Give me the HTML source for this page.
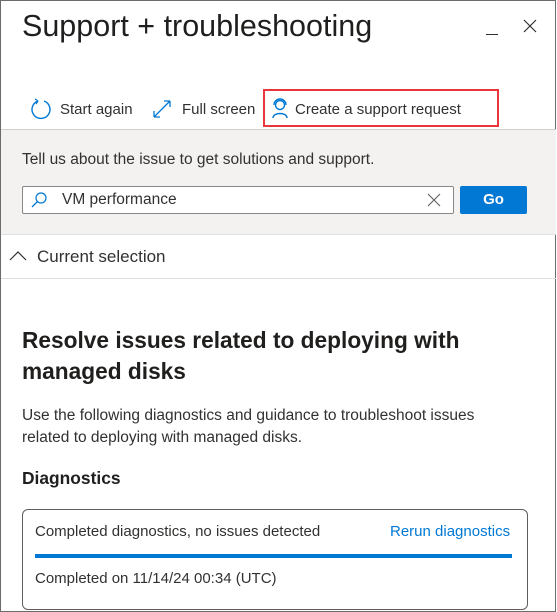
<!DOCTYPE html>
<html><head><style>
*{margin:0;padding:0;box-sizing:border-box}
body{width:557px;height:612px;overflow:hidden;background:#fff;font-family:"Liberation Sans",sans-serif;color:#323130;position:relative}
.frame{position:absolute;left:0;top:0;width:556px;height:612px;border:1px solid #6b6b6b}
.a{position:absolute;white-space:nowrap}
</style></head><body>
<div class="frame"></div>
<div class="a" style="left:22px;top:9px;font-size:30.5px;color:#201f1e">Support + troubleshooting</div>
<div class="a" style="left:486px;top:34px;width:12px;height:1px;background:#323130"></div>
<svg class="a" style="left:523px;top:19px" width="14" height="14"><path d="M1 1L13 13M13 1L1 13" stroke="#323130" stroke-width="1.2"/></svg>
<svg class="a" style="left:30px;top:98px" width="22" height="22" viewBox="0 0 22 22"><path d="M8 3A9 9 0 1 0 14 3" fill="none" stroke="#0078d4" stroke-width="1.4"/><path d="M8 3L5 1M8 3L6 6" stroke="#0078d4" stroke-width="1.2" fill="none"/></svg>
<div class="a" style="left:60px;top:101px;font-size:15px">Start again</div>
<svg class="a" style="left:152px;top:99px" width="20" height="20"><path d="M2 18L18 2M2 18V12M2 18H8M18 2H12M18 2V8" stroke="#0078d4" stroke-width="1.3" fill="none"/></svg>
<div class="a" style="left:182px;top:101px;font-size:15px">Full screen</div>
<div class="a" style="left:263px;top:89px;width:236px;height:38px;border:2px solid #e8383d"></div>
<svg class="a" style="left:270px;top:97px" width="20" height="22" viewBox="0 0 20 22"><circle cx="10" cy="8" r="4.5" fill="none" stroke="#0078d4" stroke-width="1.4"/><path d="M4 8A6 6 0 0 1 16 8M3 21C3 15 17 15 17 21" fill="none" stroke="#0078d4" stroke-width="1.4"/></svg>
<div class="a" style="left:295px;top:101px;font-size:15px">Create a support request</div>
<div class="a" style="left:1px;top:129px;width:555px;height:106px;background:#f3f2f1;border-top:1px solid #d0d0d0;border-bottom:1px solid #e0e0e0"></div>
<div class="a" style="left:22px;top:151px;font-size:15.5px">Tell us about the issue to get solutions and support.</div>
<div class="a" style="left:22px;top:186px;width:432px;height:28px;background:#fff;border:1px solid #8a8886;border-radius:2px"></div>
<svg class="a" style="left:30px;top:191px" width="18" height="18"><circle cx="11" cy="7" r="5" fill="none" stroke="#0078d4" stroke-width="1.2"/><path d="M7.5 10.5L2 16" stroke="#0078d4" stroke-width="1.3"/></svg>
<div class="a" style="left:62px;top:191px;font-size:15.5px">VM performance</div>
<svg class="a" style="left:427px;top:193px" width="14" height="14"><path d="M1 1L13 13M13 1L1 13" stroke="#605e5c" stroke-width="1.1"/></svg>
<div class="a" style="left:460px;top:186px;width:67px;height:28px;background:#0078d4;border-radius:2px;color:#fff;font-weight:bold;font-size:15px;text-align:center;line-height:28px">Go</div>
<svg class="a" style="left:9px;top:250px" width="18" height="12"><path d="M1 10L9 2L17 10" stroke="#323130" stroke-width="1.2" fill="none"/></svg>
<div class="a" style="left:37px;top:247px;font-size:17px">Current selection</div>
<div class="a" style="left:1px;top:278px;width:555px;height:1px;background:#e1dfdd"></div>
<div class="a" style="left:22px;top:325px;font-size:22.7px;font-weight:bold;line-height:31px;color:#201f1e">Resolve issues related to deploying with<br>managed disks</div>
<div class="a" style="left:22px;top:405px;font-size:15.5px;line-height:22px">Use the following diagnostics and guidance to troubleshoot issues<br>related to deploying with managed disks.</div>
<div class="a" style="left:22px;top:468px;font-size:17.4px;font-weight:bold;color:#201f1e">Diagnostics</div>
<div class="a" style="left:22px;top:509px;width:506px;height:101px;border:1px solid #605e5c;border-radius:6px"></div>
<div class="a" style="left:35px;top:523px;font-size:15px">Completed diagnostics, no issues detected</div>
<div class="a" style="left:390px;top:523px;font-size:15px;color:#0078d4">Rerun diagnostics</div>
<div class="a" style="left:35px;top:554px;width:477px;height:4px;background:#0078d4"></div>
<div class="a" style="left:35px;top:570px;font-size:15px">Completed on 11/14/24 00:34 (UTC)</div>
</body></html>
